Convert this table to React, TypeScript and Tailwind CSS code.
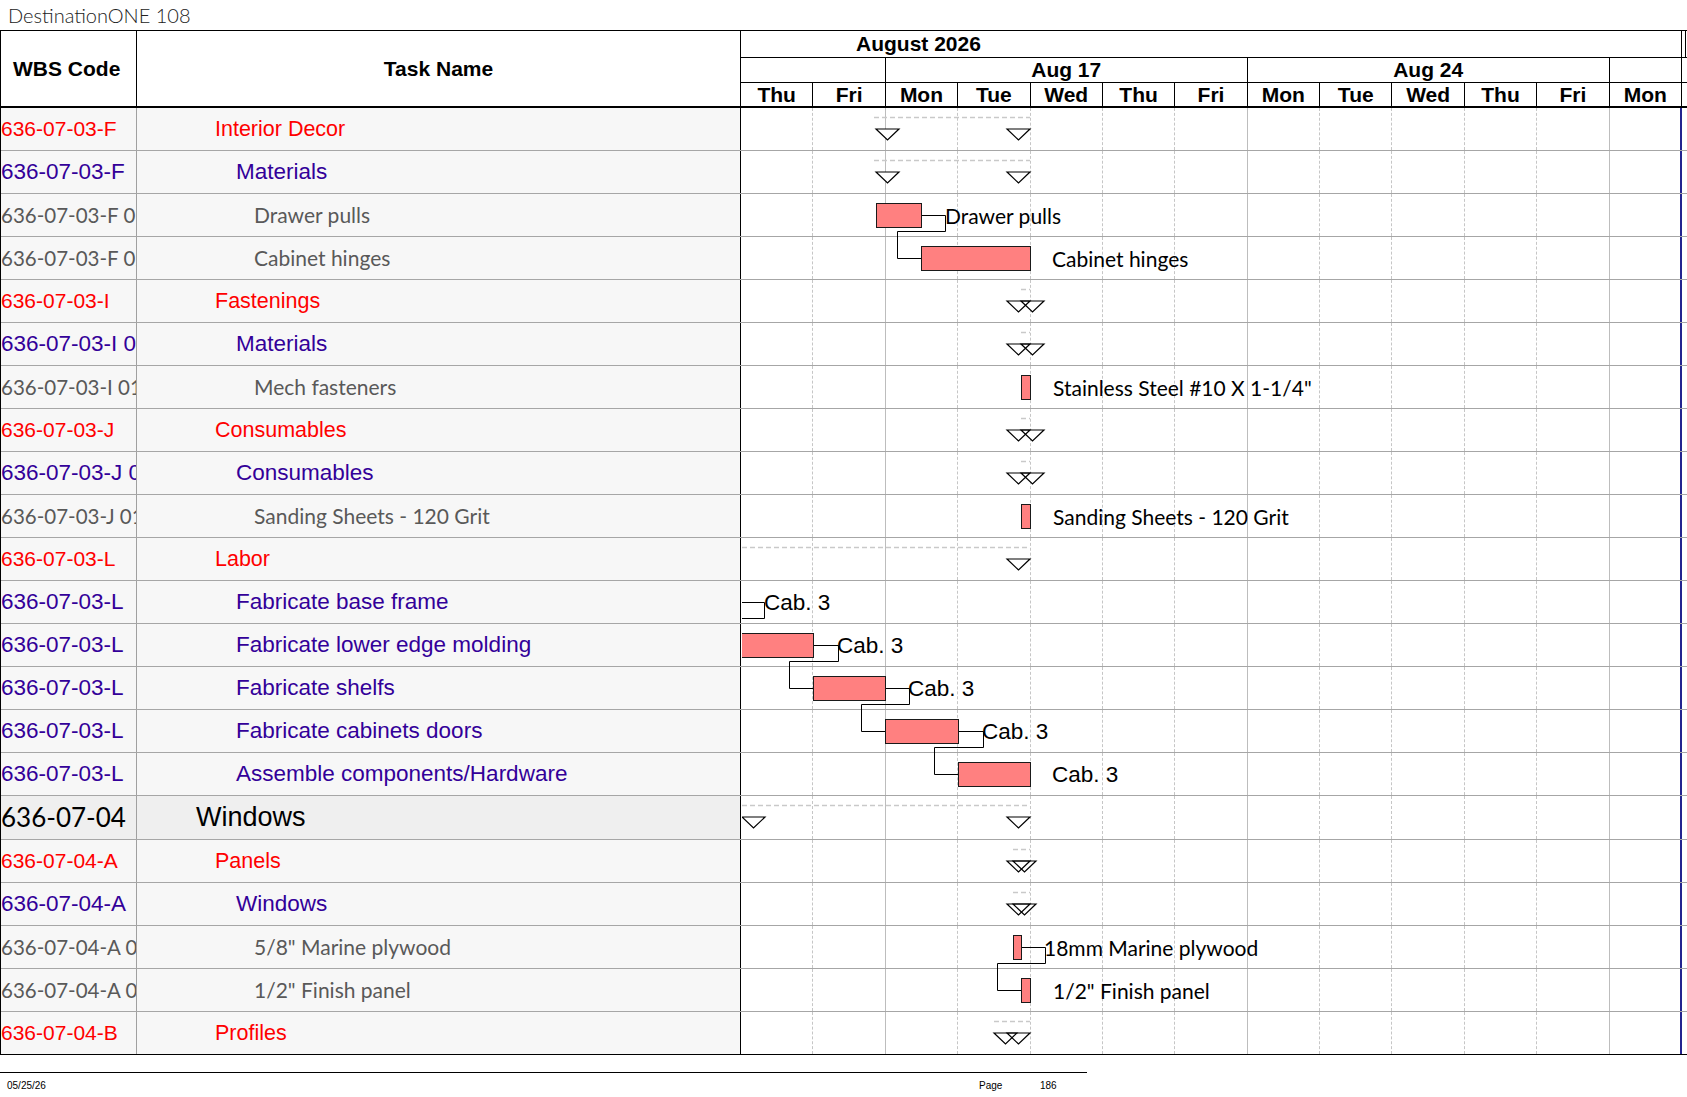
import React from "react";

type Level = 1 | 2 | 3 | 4;

interface TaskRow {
  wbs: string;
  name: string;
  level: Level;
}

const rows: TaskRow[] = [
  { wbs: "636-07-03-F", name: "Interior Decor", level: 2 },
  { wbs: "636-07-03-F", name: "Materials", level: 3 },
  { wbs: "636-07-03-F 01", name: "Drawer pulls", level: 4 },
  { wbs: "636-07-03-F 02", name: "Cabinet hinges", level: 4 },
  { wbs: "636-07-03-I", name: "Fastenings", level: 2 },
  { wbs: "636-07-03-I 01", name: "Materials", level: 3 },
  { wbs: "636-07-03-I 01.01", name: "Mech fasteners", level: 4 },
  { wbs: "636-07-03-J", name: "Consumables", level: 2 },
  { wbs: "636-07-03-J 01", name: "Consumables", level: 3 },
  { wbs: "636-07-03-J 01.01", name: "Sanding Sheets - 120 Grit", level: 4 },
  { wbs: "636-07-03-L", name: "Labor", level: 2 },
  { wbs: "636-07-03-L", name: "Fabricate base frame", level: 3 },
  { wbs: "636-07-03-L", name: "Fabricate lower edge molding", level: 3 },
  { wbs: "636-07-03-L", name: "Fabricate shelfs", level: 3 },
  { wbs: "636-07-03-L", name: "Fabricate cabinets doors", level: 3 },
  { wbs: "636-07-03-L", name: "Assemble components/Hardware", level: 3 },
  { wbs: "636-07-04", name: "Windows", level: 1 },
  { wbs: "636-07-04-A", name: "Panels", level: 2 },
  { wbs: "636-07-04-A", name: "Windows", level: 3 },
  { wbs: "636-07-04-A 01", name: '5/8" Marine plywood', level: 4 },
  { wbs: "636-07-04-A 02", name: '1/2" Finish panel', level: 4 },
  { wbs: "636-07-04-B", name: "Profiles", level: 2 },
];

const days = ["Thu", "Fri", "Mon", "Tue", "Wed", "Thu", "Fri", "Mon", "Tue", "Wed", "Thu", "Fri", "Mon"];

const wbsStyle: Record<Level, string> = {
  1: "text-[26px] text-black font-['Lato',sans-serif]",
  2: "text-[21px] text-[#ff0000] font-['Liberation_Sans',Arial,sans-serif]",
  3: "text-[22.5px] text-[#330099] font-['Liberation_Sans',Arial,sans-serif]",
  4: "text-[20.5px] text-[#595959] font-['Lato',sans-serif]",
};

const nameStyle: Record<Level, string> = {
  1: "pl-[59px] text-[27px] text-black font-['Liberation_Sans',Arial,sans-serif]",
  2: "pl-[78px] text-[21.5px] text-[#ff0000] font-['Liberation_Sans',Arial,sans-serif]",
  3: "pl-[99px] text-[22.5px] text-[#330099] font-['Liberation_Sans',Arial,sans-serif]",
  4: "pl-[117px] text-[21px] text-[#595959] font-['Lato',sans-serif]",
};

// row top inside the body (the Windows row is one pixel taller)
const rowTop = (i: number) => i * 43 + (i > 16 ? 1 : 0);
const X = (x: number) => x - 741;

const gridLine = (i: number) =>
  i === 12
    ? "border-r-2 border-r-[#23238f]"
    : i === 1 || i === 6 || i === 11
      ? "border-r border-r-[#bdbdbd]"
      : "border-r border-dashed border-r-[#c6c6c6]";

const summaries = [
  { row: 0, from: 873, start: 875, end: 1029 },
  { row: 1, from: 873, start: 875, end: 1029 },
  { row: 4, from: 1020, start: 1020, end: 1029 },
  { row: 5, from: 1020, start: 1020, end: 1029 },
  { row: 7, from: 1020, start: 1020, end: 1029 },
  { row: 8, from: 1020, start: 1020, end: 1029 },
  { row: 10, from: 741, start: null, end: 1029 },
  { row: 16, from: 741, start: 741, end: 1029 },
  { row: 17, from: 1012, start: 1012, end: 1029 },
  { row: 18, from: 1012, start: 1012, end: 1029 },
  { row: 21, from: 993, start: 993, end: 1029 },
];

const bars = [
  { row: 2, x1: 875, x2: 920 },
  { row: 3, x1: 920, x2: 1029 },
  { row: 6, x1: 1020, x2: 1029 },
  { row: 9, x1: 1020, x2: 1029 },
  { row: 12, x1: 730, x2: 812 },
  { row: 13, x1: 812, x2: 884 },
  { row: 14, x1: 884, x2: 957 },
  { row: 15, x1: 957, x2: 1029 },
  { row: 19, x1: 1012, x2: 1020 },
  { row: 20, x1: 1020, x2: 1029 },
];

// finish-to-start links: bar end -> leader -> down -> back -> next bar start
const links = [
  { row: 2, end: 920, lead: 944, next: 920 },
  { row: 11, end: 738, lead: 763, next: 730 },
  { row: 12, end: 812, lead: 837, next: 812 },
  { row: 13, end: 884, lead: 908, next: 884 },
  { row: 14, end: 957, lead: 982, next: 957 },
  { row: 19, end: 1020, lead: 1044, next: 1020 },
];

const labels = [
  { row: 2, x: 944, text: "Drawer pulls", arial: false },
  { row: 3, x: 1051, text: "Cabinet hinges", arial: false },
  { row: 6, x: 1052, text: 'Stainless Steel #10 X 1-1/4"', arial: false },
  { row: 9, x: 1052, text: "Sanding Sheets - 120 Grit", arial: false },
  { row: 11, x: 763, text: "Cab. 3", arial: true },
  { row: 12, x: 836, text: "Cab. 3", arial: true },
  { row: 13, x: 907, text: "Cab. 3", arial: true },
  { row: 14, x: 981, text: "Cab. 3", arial: true },
  { row: 15, x: 1051, text: "Cab. 3", arial: true },
  { row: 19, x: 1043, text: "18mm Marine plywood", arial: false },
  { row: 20, x: 1052, text: '1/2" Finish panel', arial: false },
];

const tri = (x: number, y: number) => `${X(x)},${y} ${X(x) + 23},${y} ${X(x) + 11.5},${y + 11}`;

const GanttLayer = () => {
  const tris: string[] = [];
  summaries.forEach((s) => {
    const y = rowTop(s.row) + 21;
    if (s.start !== null) tris.push(tri(s.start, y));
    tris.push(tri(s.end - 23, y));
  });

  return (
    <div className="absolute top-0 left-[741px] w-[946px] h-[947px] overflow-hidden pointer-events-none">
      <svg width="946" height="947" className="absolute inset-0">
        {summaries.map((s) => (
          <line
            key={`d${s.row}`}
            x1={X(s.from)}
            x2={X(s.end)}
            y1={rowTop(s.row) + 9.5}
            y2={rowTop(s.row) + 9.5}
            stroke="#c9c9c9"
            strokeWidth="1.5"
            strokeDasharray="5 3"
          />
        ))}
        {links.map((l) => {
          const cy = rowTop(l.row) + 21.5;
          const low = rowTop(l.row) + 37.5;
          const ny = rowTop(l.row + 1) + 21.5;
          const back = l.next - 24;
          return (
            <polyline
              key={`l${l.row}`}
              points={`${X(l.end)},${cy} ${X(l.lead) + 0.5},${cy} ${X(l.lead) + 0.5},${low} ${X(back) + 0.5},${low} ${X(back) + 0.5},${ny} ${X(l.next)},${ny}`}
              fill="none"
              stroke="#000"
              strokeWidth="1"
            />
          );
        })}
        {bars.map((b) => (
          <rect
            key={`b${b.row}`}
            x={X(b.x1) + 0.5}
            y={rowTop(b.row) + 9.5}
            width={b.x2 - b.x1}
            height={24}
            fill="#ff8080"
            stroke="#1a1a1a"
            strokeWidth="1"
          />
        ))}
        {tris.map((p, i) => (
          <polygon key={`f${i}`} points={p} fill="#fff" />
        ))}
        {tris.map((p, i) => (
          <polygon key={`t${i}`} points={p} fill="none" stroke="#000" strokeWidth="1.2" />
        ))}
      </svg>
      {labels.map((l) => (
        <div
          key={`t${l.row}`}
          className={`absolute h-[43px] flex items-center whitespace-nowrap text-black ${
            l.arial ? "text-[22.5px] font-['Liberation_Sans',Arial,sans-serif]" : "text-[21px] font-['Lato',sans-serif]"
          }`}
          style={{ left: X(l.x), top: rowTop(l.row) }}
        >
          {l.text}
        </div>
      ))}
    </div>
  );
};

const ChartHeader = () => (
  <div className="w-[946px] flex flex-col font-['Liberation_Sans',Arial,sans-serif] font-bold text-[21px] text-black">
    <div className="h-[27px] flex border-b border-black">
      <div className="w-[941px] border-r border-black pl-[115px] leading-[26px]">August 2026</div>
      <div className="w-[4px] border-r border-black" />
    </div>
    <div className="h-[25px] flex border-b border-black">
      <div className="w-[941px] grid grid-cols-[repeat(13,minmax(0,1fr))] leading-[23px]">
        <div className="col-span-2 border-r border-black" />
        <div className="col-span-5 border-r border-black text-center">Aug 17</div>
        <div className="col-span-5 border-r border-black text-center">Aug 24</div>
        <div className="col-span-1 border-r border-black" />
      </div>
    </div>
    <div className="h-[23px] flex">
      <div className="w-[941px] grid grid-cols-[repeat(13,minmax(0,1fr))] leading-[23px]">
        {days.map((d, i) => (
          <div key={i} className="border-r border-black text-center">
            {d}
          </div>
        ))}
      </div>
    </div>
  </div>
);

const App = () => {
  return (
    <div className="w-[1687px] h-[1097px] bg-white overflow-hidden">
      <div className="h-[30px] pl-[8px] flex items-center text-[20px] font-light text-[#222] font-['Lato',sans-serif]">
        DestinationONE 108
      </div>

      <div className="border-l border-black">
        <div className="h-[78px] flex border-t border-b-2 border-black">
          <div className="w-[136px] border-r border-black flex items-center pl-[12px] font-['Liberation_Sans',Arial,sans-serif] font-bold text-[21px]">
            WBS Code
          </div>
          <div className="w-[604px] border-r border-black flex items-center justify-center font-['Liberation_Sans',Arial,sans-serif] font-bold text-[21px]">
            Task Name
          </div>
          <ChartHeader />
        </div>

        <div className="relative">
          {rows.map((r, i) => {
            const last = i === rows.length - 1;
            return (
              <div
                key={i}
                className={`flex border-b ${r.level === 1 ? "h-[44px]" : "h-[43px]"} ${
                  last ? "border-b-black" : "border-b-[#a6a6a6]"
                }`}
              >
                <div
                  className={`w-[136px] border-r border-r-[#a0a0a0] flex items-center overflow-hidden whitespace-nowrap ${
                    r.level === 1 ? "bg-[#efefef]" : "bg-[#f7f7f7]"
                  } ${wbsStyle[r.level]}`}
                >
                  {r.wbs}
                </div>
                <div
                  className={`w-[604px] border-r border-black flex items-center whitespace-nowrap ${
                    r.level === 1 ? "bg-[#efefef]" : "bg-[#f7f7f7]"
                  } ${nameStyle[r.level]}`}
                >
                  {r.name}
                </div>
                <div className="w-[946px] flex bg-white">
                  <div className="w-[941px] grid grid-cols-[repeat(13,minmax(0,1fr))]">
                    {days.map((_, d) => (
                      <div key={d} className={gridLine(d)} />
                    ))}
                  </div>
                </div>
              </div>
            );
          })}
          <GanttLayer />
        </div>
      </div>

      <div className="mt-[17px] w-[1087px] border-t border-black h-[22px] relative font-['Liberation_Sans',Arial,sans-serif] text-[10px] text-black">
        <span className="absolute left-[7px] top-[5px]">05/25/26</span>
        <span className="absolute left-[979px] top-[5px]">Page</span>
        <span className="absolute left-[1040px] top-[5px]">186</span>
      </div>
    </div>
  );
};

export default App;
